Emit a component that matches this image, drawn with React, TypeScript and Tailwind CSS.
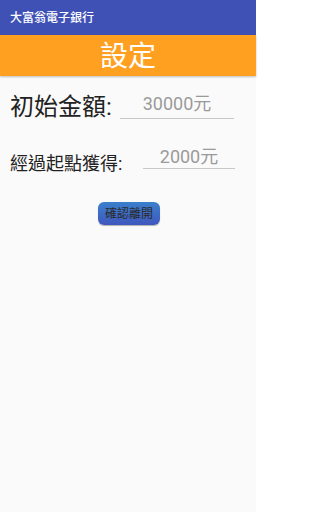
export default function App() {
  return (
    <div className="w-[256px] h-[512px] bg-[#fafafa] flex flex-col font-['Roboto','Noto_Sans_CJK_TC',sans-serif]">
      {/* barra do app */}
      <div className="h-[35px] bg-[#3f51b5] flex items-center px-[10px] pt-[1px]">
        <span className="text-white text-[12px] leading-none font-medium">大富翁電子銀行</span>
      </div>

      {/* título */}
      <div className="h-[41px] bg-[#ffa021] flex items-center justify-center pt-[3px] shadow-[0_1px_2px_rgba(0,0,0,0.25)]">
        <span className="text-white text-[28px] leading-none">設定</span>
      </div>

      <div className="flex items-end pl-[10px] mt-[13px] h-[30px]">
        <span className="w-[110px] shrink-0 text-[#222] text-[24px] leading-[30px] mb-[-3px]">初始金額:</span>
        <div className="w-[114px] border-b border-[#c8c8c8] flex justify-center pb-[3px]">
          <span className="text-[#9a9a9a] text-[18px] leading-[22px]">30000元</span>
        </div>
      </div>

      <div className="flex items-end pl-[10px] mt-[24px] h-[26px]">
        <span className="w-[133px] shrink-0 text-[#222] text-[18px] leading-[26px] mb-[-8px]">經過起點獲得:</span>
        <div className="w-[92px] border-b border-[#c8c8c8] flex justify-center">
          <span className="text-[#9a9a9a] text-[18px] leading-[22px]">2000元</span>
        </div>
      </div>

      <div className="flex justify-center mt-[33px] pl-[2px]">
        <button className="w-[62px] h-[23px] rounded-[6px] bg-gradient-to-b from-[#3a80cc] to-[#3f57bd] text-[#2a2a2a] text-[12px] leading-none flex items-center justify-center shadow-[0_1px_1px_rgba(0,0,0,0.3)]">
          確認離開
        </button>
      </div>
    </div>
  );
}
